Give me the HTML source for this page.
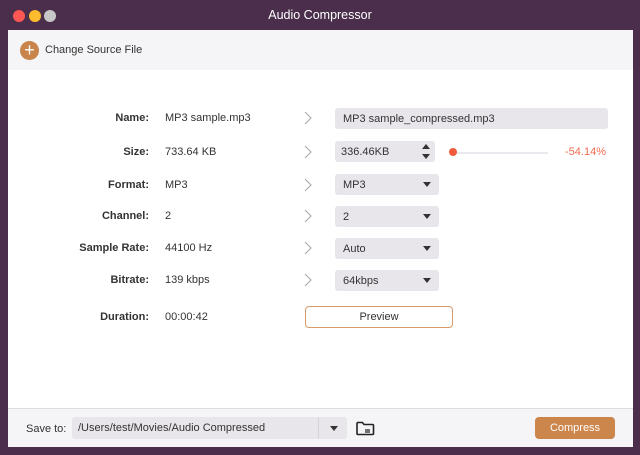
<!DOCTYPE html>
<html><head><style>
*{margin:0;padding:0;box-sizing:border-box}
body{width:640px;height:455px;background:#4a2e4b;font-family:"Liberation Sans",sans-serif;position:relative;overflow:hidden;font-size:11px;color:#333}
.a{position:absolute}
.dot{position:absolute;top:10px;width:12px;height:12px;border-radius:50%}
.lbl{position:absolute;right:491px;font-weight:bold;color:#333;width:120px;text-align:right}
.val{position:absolute;left:165px}
.box{position:absolute;left:335px;height:21px;background:#e8e6ea;border-radius:3px;padding-left:8px;padding-top:5px;line-height:12px}
.tri{position:absolute;right:8px;top:8px;width:0;height:0;border-left:4.5px solid transparent;border-right:4.5px solid transparent;border-top:5px solid #333}
</style></head><body>
<div class="dot" style="left:13px;background:#fc5753"></div>
<div class="dot" style="left:29px;background:#fdbc2e"></div>
<div class="dot" style="left:44px;background:#c8c6c8"></div>
<div class="a" style="left:0;width:640px;top:8px;text-align:center;color:#fff;font-size:12.5px">Audio Compressor</div>
<div class="a" style="left:8px;top:30px;width:625px;height:417px;background:#fff"></div>
<div class="a" style="left:8px;top:30px;width:625px;height:40px;background:#f5f4f6"></div>
<div class="a" style="left:20px;top:41px;width:19px;height:19px;border-radius:50%;background:#c8844a;color:#fff;text-align:center;line-height:18px;font-size:18px">+</div>
<div class="a" style="left:45px;top:44px;color:#333">Change Source File</div>

<div class="lbl" style="top:112px">Name:</div><div class="val" style="top:112px">MP3 sample.mp3</div>
<div class="lbl" style="top:146px">Size:</div><div class="val" style="top:146px">733.64 KB</div>
<div class="lbl" style="top:179px">Format:</div><div class="val" style="top:179px">MP3</div>
<div class="lbl" style="top:210px">Channel:</div><div class="val" style="top:210px">2</div>
<div class="lbl" style="top:242px">Sample Rate:</div><div class="val" style="top:242px">44100 Hz</div>
<div class="lbl" style="top:274px">Bitrate:</div><div class="val" style="top:274px">139 kbps</div>
<div class="lbl" style="top:311px">Duration:</div><div class="val" style="top:311px">00:00:42</div>

<svg class="a" style="left:0;top:0" width="640" height="455"><g fill="none" stroke="#aaa" stroke-width="1.1">
<path d="M305 112l6 6-6 6"/><path d="M305 146l6 6-6 6"/><path d="M305 179l6 6-6 6"/><path d="M305 210l6 6-6 6"/><path d="M305 242l6 6-6 6"/><path d="M305 274l6 6-6 6"/></g></svg>

<div class="box" style="top:108px;width:273px">MP3 sample_compressed.mp3</div>
<div class="box" style="top:141px;width:100px;padding-left:6px">336.46KB
<div class="a" style="right:5px;top:3px;border-left:4px solid transparent;border-right:4px solid transparent;border-bottom:5px solid #333"></div>
<div class="a" style="right:5px;top:13px;border-left:4px solid transparent;border-right:4px solid transparent;border-top:5px solid #333"></div></div>
<div class="a" style="left:452px;top:152px;width:96px;height:2px;background:#ebe9ee"></div>
<div class="a" style="left:449px;top:148px;width:8px;height:8px;border-radius:50%;background:#f25a3c"></div>
<div class="a" style="left:565px;top:146px;color:#f26a4c">-54.14%</div>
<div class="box" style="top:174px;width:104px">MP3<div class="tri"></div></div>
<div class="box" style="top:206px;width:104px">2<div class="tri"></div></div>
<div class="box" style="top:238px;width:104px">Auto<div class="tri"></div></div>
<div class="box" style="top:270px;width:104px">64kbps<div class="tri"></div></div>
<div class="a" style="left:305px;top:306px;width:148px;height:22px;border:1px solid #d79a6c;border-radius:4px;text-align:center;line-height:20px">Preview</div>

<div class="a" style="left:8px;top:408px;width:625px;height:39px;background:#f5f4f6;border-top:1px solid #ddd"></div>
<div class="a" style="left:26px;top:423px">Save to:</div>
<div class="a" style="left:72px;top:417px;width:275px;height:22px;background:#e8e6ea;border-radius:3px;line-height:12px;padding-top:5px;padding-left:6px">/Users/test/Movies/Audio Compressed
<div class="a" style="left:246px;top:0;width:1px;height:22px;background:#d4d2d6"></div>
<div class="a" style="left:258px;top:9px;border-left:4px solid transparent;border-right:4px solid transparent;border-top:5px solid #333"></div></div>
<svg class="a" style="left:355px;top:419px" width="20" height="18"><path d="M2 3.5h5.5l1.5 2h8.5a1 1 0 0 1 1 1v8a1 1 0 0 1-1 1h-14.5a1 1 0 0 1-1-1v-10a1 1 0 0 1 1-1z" fill="none" stroke="#222" stroke-width="1.6"/><path d="M10 11h5M10 13h5" stroke="#222" stroke-width="1.2"/></svg>
<div class="a" style="left:535px;top:417px;width:80px;height:22px;background:#cc854b;border-radius:4px;color:#fff;text-align:center;line-height:22px">Compress</div>
</body></html>
